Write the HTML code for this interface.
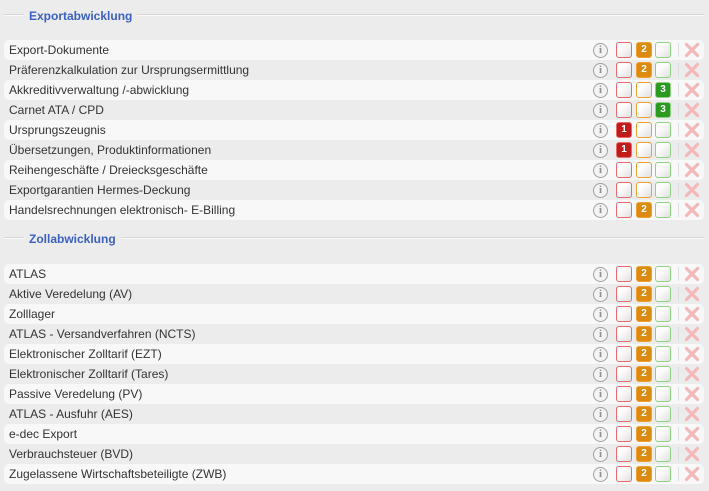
<!DOCTYPE html>
<html><head><meta charset="utf-8"><style>
*{margin:0;padding:0;box-sizing:border-box}
body{width:709px;height:491px;background:#ececec;font-family:"Liberation Sans",Arial,sans-serif;position:relative;overflow:hidden}
.h{position:absolute;left:4px;right:5px;height:14px}
.h:before{content:"";position:absolute;left:0;right:0;top:7px;border-top:1px solid #d6d6d6;border-bottom:1px solid #fafafa}
.h span{position:relative;left:20px;background:#ececec;padding:0 5px;color:#3b5fc4;font-weight:bold;font-size:12px;line-height:14px}
.r{position:absolute;left:4px;width:700px;height:20px;border-radius:5px;font-size:12px;color:#333;line-height:21px;padding-left:5px}
.r.o{background:#f8f8f8}
.i{position:absolute;left:589px;top:3px;width:15px;height:15px;border:1.5px solid #a0a0a0;border-radius:50%;color:#909090;font:bold 11px/12px "Liberation Serif",serif;text-align:center;background:#f3f3f3}
.b{position:absolute;top:2px;width:16px;height:16px;border-radius:3px;background:linear-gradient(135deg,#fff 30%,#e0e0e0);border:1.5px solid}
.b1{left:612px;border-color:#e86a6a}.b2{left:632px;border-color:#f0a030}.b3{left:651px;border-color:#8fd080}
.b.f1{background:#c01c1c;border-color:#e86a6a}.b.f2{background:#dc8a10;border-color:#f0a030}.b.f3{background:#2a9a20;border-color:#8fd080}
.b.f1,.b.f2,.b.f3{color:#fff;font:bold 10px/13px "Liberation Sans",sans-serif;text-align:center}
.s{position:absolute;left:674px;top:3px;width:1px;height:14px;background:#ddd}
.x{position:absolute;left:680px;top:2px;width:16px;height:16px}
</style></head><body>
<div class="h" style="top:7px"><span>Exportabwicklung</span></div>
<div class="h" style="top:230px"><span>Zollabwicklung</span></div>
<div id="c"></div>
<script>
var a=[["Export-Dokumente",2],["Präferenzkalkulation zur Ursprungsermittlung",2],["Akkreditivverwaltung /-abwicklung",3],["Carnet ATA / CPD",3],["Ursprungszeugnis",1],["Übersetzungen, Produktinformationen",1],["Reihengeschäfte / Dreiecksgeschäfte",0],["Exportgarantien Hermes-Deckung",0],["Handelsrechnungen elektronisch- E-Billing",2]];
var b=["ATLAS","Aktive Veredelung (AV)","Zolllager","ATLAS - Versandverfahren (NCTS)","Elektronischer Zolltarif (EZT)","Elektronischer Zolltarif (Tares)","Passive Veredelung (PV)","ATLAS - Ausfuhr (AES)","e-dec Export","Verbrauchsteuer (BVD)","Zugelassene Wirtschaftsbeteiligte (ZWB)"].map(function(t){return [t,2]});
var h="";
var X='<svg class="x" viewBox="0 0 16 16"><path d="M2.5 2.5L13.5 13.5M13.5 2.5L2.5 13.5" stroke="#f4b8b8" stroke-width="3.2" stroke-linecap="round"/></svg>';
function row(t,n,y,k){h+='<div class="r'+(k%2==0?' o':'')+'" style="top:'+y+'px">'+t+'<div class="i">i</div>';for(var j=1;j<=3;j++)h+='<div class="b b'+j+(n==j?' f'+j:'')+'">'+(n==j?j:'')+'</div>';h+='<div class="s"></div>'+X+'</div>';}
a.forEach(function(r,k){row(r[0],r[1],40+k*20,k)});
b.forEach(function(r,k){row(r[0],r[1],264+k*20,k)});
document.getElementById("c").innerHTML=h;
</script>
</body></html>
